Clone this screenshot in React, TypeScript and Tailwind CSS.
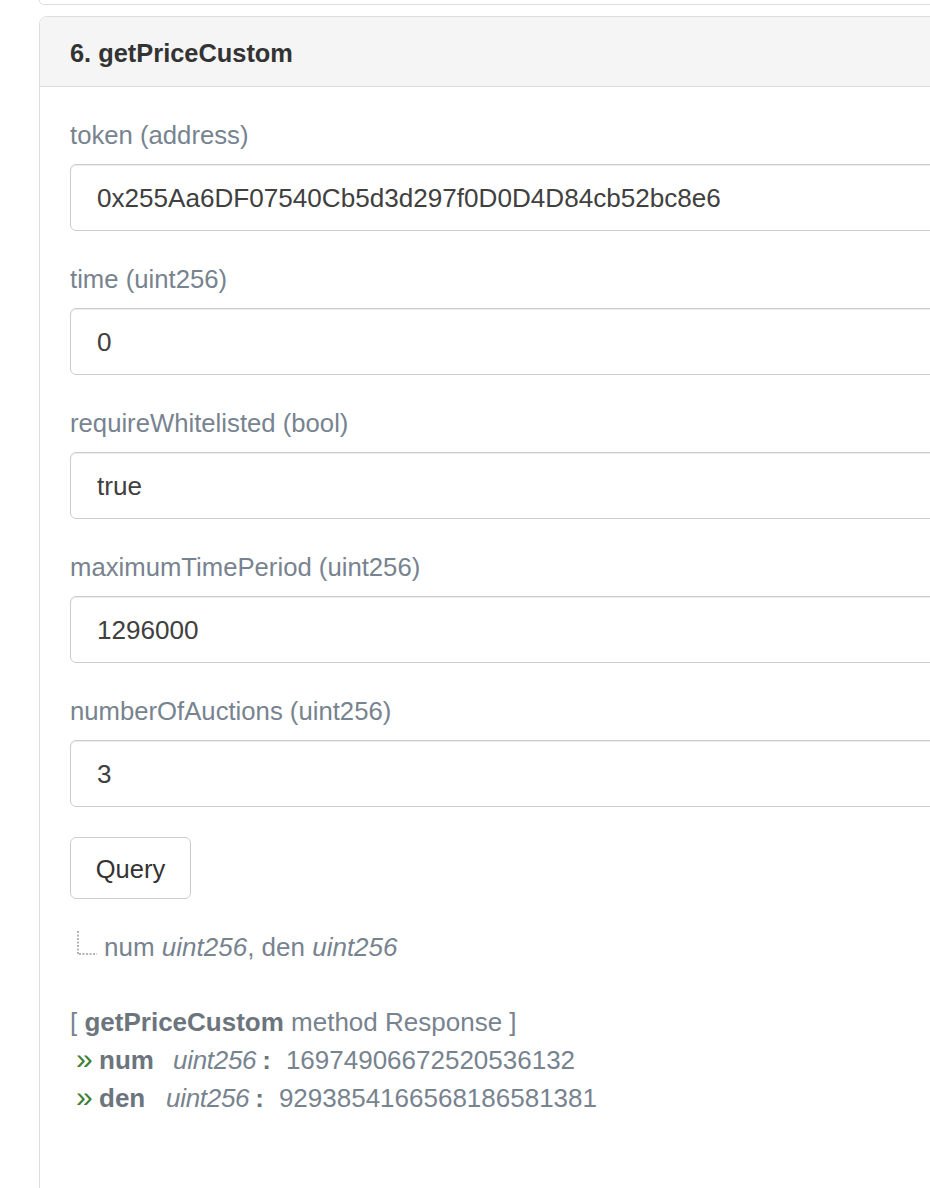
import React from "react";

const font = { fontFamily: '"Liberation Sans", Arial, Helvetica, sans-serif' };

function Field({ label, value }: { label: string; value: string }) {
  return (
    <div className="mb-[30px]">
      <div className="text-[25.7px] leading-[36px] text-[#77838f]">{label}</div>
      <div className="mt-[11px] h-[67px] w-[900px] rounded-[6px] border border-[#cccccc] bg-white pl-[26px] flex items-center shadow-[inset_0_1px_1px_rgba(0,0,0,0.075)]">
        <span className="text-[26.1px] text-[#404040] pt-[2px]">{value}</span>
      </div>
    </div>
  );
}

function RespLine({ name, nameWidth, value }: { name: string; nameWidth: string; value: string }) {
  return (
    <div className="flex items-center h-[38px] text-[26px] text-[#77838f] whitespace-pre">
      <span className="ml-[6px] w-[23px] text-[#3d7f35] text-[30px] leading-[30px] mt-[-3px]">»</span>
      <span className={`font-bold text-[#6c757d] ${nameWidth}`}>{name}</span>
      <span className="italic tracking-[-0.3px]">uint256</span>
      <span className="font-bold text-[#6c757d] ml-[6px]">:</span>
      <span className="ml-[15px]">{value}</span>
    </div>
  );
}

export default function App() {
  return (
    <div className="w-[930px] h-[1188px] overflow-hidden bg-white" style={font}>
      <div className="pl-[39px]">
        <div className="h-[5px] w-[960px] rounded-b-[8px] border-x border-b border-[#dddddd]" />
        <div className="mt-[11px] w-[960px] h-[1300px] rounded-t-[8px] border border-[#dddddd]">
          <div className="h-[70px] bg-[#f5f5f5] border-b border-[#dddddd] rounded-t-[7px] pl-[30px] flex items-center">
            <span className="text-[25.4px] font-bold text-[#333333] pt-[3px]">6. getPriceCustom</span>
          </div>
          <div className="pl-[30px] pt-[30px]">
            <Field label="token (address)" value="0x255Aa6DF07540Cb5d3d297f0D0D4D84cb52bc8e6" />
            <Field label="time (uint256)" value="0" />
            <Field label="requireWhitelisted (bool)" value="true" />
            <Field label="maximumTimePeriod (uint256)" value="1296000" />
            <Field label="numberOfAuctions (uint256)" value="3" />
            <button className="mt-[3px] h-[62px] w-[121px] rounded-[6px] border border-[#cccccc] bg-white text-[25.5px] text-[#333333] flex items-center justify-center pt-[2px]">
              Query
            </button>
            <div className="mt-[29px] flex items-center h-[36px]">
              <svg width="24" height="30" viewBox="0 0 24 30" className="ml-[6px] mt-[-5px]">
                <line x1="2" y1="2" x2="2" y2="25" stroke="#b5b5b5" strokeWidth="2" strokeDasharray="2 1.5" />
                <line x1="3" y1="25" x2="21" y2="25" stroke="#b5b5b5" strokeWidth="2" strokeDasharray="2 1.5" />
              </svg>
              <span className="ml-[4px] text-[26px] text-[#77838f] pt-[2px]">
                num <i>uint256</i>, den <i>uint256</i>
              </span>
            </div>
            <div className="mt-[39px]">
              <div className="h-[38px] flex items-center text-[26px] text-[#77838f] whitespace-pre">
                <span>[ </span>
                <span className="font-bold text-[#6c757d]">getPriceCustom</span>
                <span> method Response ]</span>
              </div>
              <RespLine name="num" nameWidth="w-[74px]" value="16974906672520536132" />
              <RespLine name="den" nameWidth="w-[67px]" value="9293854166568186581381" />
            </div>
          </div>
        </div>
      </div>
    </div>
  );
}
